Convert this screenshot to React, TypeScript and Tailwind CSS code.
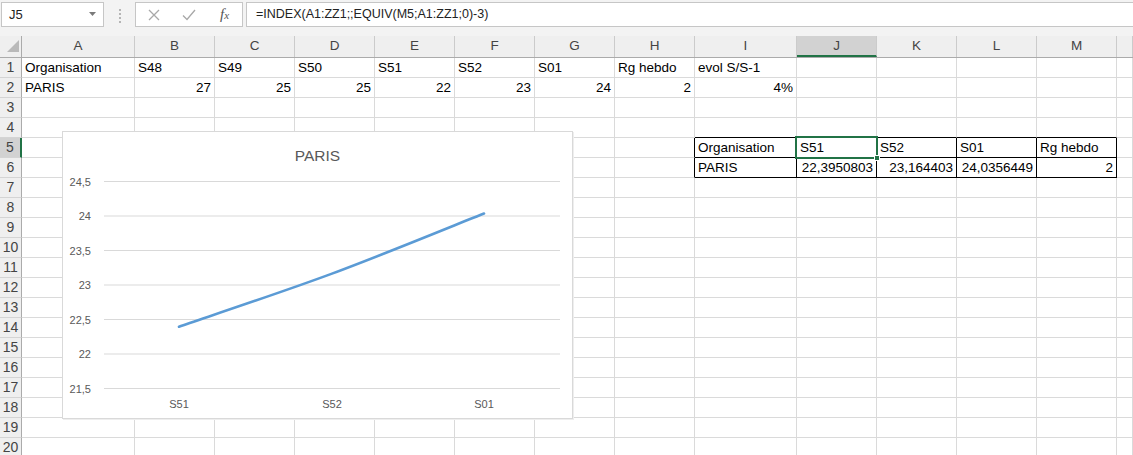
import React from "react";

const COLS = [
  { k: "A", w: "w-[113px]" },
  { k: "B", w: "w-[80px]" },
  { k: "C", w: "w-[80px]" },
  { k: "D", w: "w-[80px]" },
  { k: "E", w: "w-[80px]" },
  { k: "F", w: "w-[80px]" },
  { k: "G", w: "w-[80px]" },
  { k: "H", w: "w-[80px]" },
  { k: "I", w: "w-[102px]" },
  { k: "J", w: "w-[80px]" },
  { k: "K", w: "w-[80px]" },
  { k: "L", w: "w-[80px]" },
  { k: "M", w: "w-[80px]" },
  { k: "N", w: "flex-1" },
];

const ROWS = Array.from({ length: 20 }, (_, i) => i + 1);

// r = right aligned (numbers)
const cells: Record<string, { t: string; r?: boolean }> = {
  A1: { t: "Organisation" },
  B1: { t: "S48" },
  C1: { t: "S49" },
  D1: { t: "S50" },
  E1: { t: "S51" },
  F1: { t: "S52" },
  G1: { t: "S01" },
  H1: { t: "Rg hebdo" },
  I1: { t: "evol S/S-1" },
  A2: { t: "PARIS" },
  B2: { t: "27", r: true },
  C2: { t: "25", r: true },
  D2: { t: "25", r: true },
  E2: { t: "22", r: true },
  F2: { t: "23", r: true },
  G2: { t: "24", r: true },
  H2: { t: "2", r: true },
  I2: { t: "4%", r: true },
  I5: { t: "Organisation" },
  J5: { t: "S51" },
  K5: { t: "S52" },
  L5: { t: "S01" },
  M5: { t: "Rg hebdo" },
  I6: { t: "PARIS" },
  J6: { t: "22,3950803", r: true },
  K6: { t: "23,164403", r: true },
  L6: { t: "24,0356449", r: true },
  M6: { t: "2", r: true },
};

// bordered block I5:M6
const inTable = (r: number, c: number) => r >= 5 && r <= 6 && c >= 8 && c <= 12;

const font = { fontFamily: '"Liberation Sans", Arial, sans-serif' };

function Toolbar() {
  return (
    <div className="flex h-[36px] items-start bg-[#f3f3f3] pt-[2px]">
      <div className="relative ml-[1px] flex h-[25px] w-[103px] items-center border border-[#c6c6c6] bg-white pl-[7px] text-[13px] text-[#222]">
        J5
        <svg className="absolute right-[7px] top-[9px]" width="7" height="5" viewBox="0 0 7 5">
          <path d="M0 0 L7 0 L3.5 4 Z" fill="#7a7a7a" />
        </svg>
      </div>
      <div className="flex w-[31px] flex-col items-center gap-[2px] pt-[7px]">
        <span className="h-[2px] w-[2px] bg-[#b5b5b5]" />
        <span className="h-[2px] w-[2px] bg-[#b5b5b5]" />
        <span className="h-[2px] w-[2px] bg-[#b5b5b5]" />
        <span className="h-[2px] w-[2px] bg-[#b5b5b5]" />
      </div>
      <div className="flex h-[25px] w-[108px] items-center border border-[#c6c6c6] bg-white">
        <svg className="ml-[12px]" width="12" height="12" viewBox="0 0 12 12">
          <path d="M1 1 L11 11 M11 1 L1 11" stroke="#a8a8a8" strokeWidth="1.3" />
        </svg>
        <svg className="ml-[22px]" width="14" height="12" viewBox="0 0 14 12">
          <path d="M1 6.5 L5 10.5 L13 1" stroke="#a8a8a8" strokeWidth="1.3" fill="none" />
        </svg>
        <span
          className="ml-[24px] text-[15px] italic text-[#555]"
          style={{ fontFamily: '"Liberation Serif", "Times New Roman", serif' }}
        >
          f<span className="text-[11px]">x</span>
        </span>
      </div>
      <div className="ml-[3px] flex h-[25px] flex-1 items-center border border-r-0 border-[#c6c6c6] bg-white pl-[9px] text-[12.5px] text-[#222]">
        =INDEX(A1:ZZ1;;EQUIV(M5;A1:ZZ1;0)-3)
      </div>
    </div>
  );
}

function HeaderRow() {
  return (
    <div className="flex h-[22px] border-b border-[#ababab] bg-[#efefef] text-[13.5px] text-[#444]">
      <div className="relative w-[22px] border-r border-[#ababab]">
        <svg className="absolute left-[7px] top-[4px]" width="12" height="12" viewBox="0 0 12 12">
          <path d="M12 0 L12 12 L0 12 Z" fill="#b9b9b9" />
        </svg>
      </div>
      {COLS.map((c) => (
        <div
          key={c.k}
          className={`${c.w} flex items-center justify-center border-r border-[#cbcbcb] ${
            c.k === "J" ? "border-b-2 border-b-[#217346] bg-[#d2d2d2] pt-[2px]" : ""
          }`}
        >
          {c.k === "N" ? "" : c.k}
        </div>
      ))}
    </div>
  );
}

function Row({ r }: { r: number }) {
  return (
    <div className="flex h-[20px]">
      <div
        className={`flex w-[22px] items-center justify-center border-b border-[#d4d4d4] text-[14px] text-[#444] ${
          r === 5 ? "border-r-2 border-r-[#217346] bg-[#d2d2d2]" : "border-r border-r-[#ababab] bg-[#efefef]"
        }`}
      >
        {r}
      </div>
      {COLS.map((c, ci) => {
        const cell = cells[c.k + r];
        const blackR = inTable(r, ci) || inTable(r, ci + 1);
        const blackB = inTable(r, ci) || inTable(r + 1, ci);
        return (
          <div
            key={c.k}
            className={`${c.w} flex items-center overflow-visible whitespace-nowrap border-r border-b px-[3px] pt-[1px] text-[13.5px] text-black ${
              blackR ? "border-r-black" : "border-r-[#dadada]"
            } ${blackB ? "border-b-black" : "border-b-[#dadada]"} ${cell?.r ? "justify-end" : "justify-start"}`}
          >
            {cell?.t}
          </div>
        );
      })}
    </div>
  );
}

// chart geometry, relative to the chart box
const Y_TICKS = ["24,5", "24", "23,5", "23", "22,5", "22", "21,5"];
const yAt = (v: number) => 49.5 + ((24.5 - v) / 0.5) * 34.5;

function Chart() {
  const pts = [
    { x: 116, y: yAt(22.3950803), l: "S51" },
    { x: 269, y: yAt(23.164403), l: "S52" },
    { x: 421, y: yAt(24.0356449), l: "S01" },
  ];
  const [p0, p1, p2] = pts;
  const d = `M${p0.x} ${p0.y} C${p0.x + (p1.x - p0.x) / 6} ${p0.y + (p1.y - p0.y) / 6} ${
    p1.x - (p2.x - p0.x) / 6
  } ${p1.y - (p2.y - p0.y) / 6} ${p1.x} ${p1.y} C${p1.x + (p2.x - p0.x) / 6} ${p1.y + (p2.y - p0.y) / 6} ${
    p2.x - (p2.x - p1.x) / 6
  } ${p2.y - (p2.y - p1.y) / 6} ${p2.x} ${p2.y}`;

  return (
    <div className="absolute left-[62px] top-[95px] h-[288px] w-[511px] border border-[#d9d9d9] bg-white shadow-[1px_1px_0_#eeeeee]">
      <svg width="509" height="286" viewBox="0 0 509 286" style={font}>
        <text x="254.5" y="29" textAnchor="middle" fontSize="15.5" fill="#595959">
          PARIS
        </text>
        {Y_TICKS.map((t, i) => (
          <g key={t}>
            <line x1="41" x2="497" y1={49.5 + i * 34.5} y2={49.5 + i * 34.5} stroke="#d9d9d9" strokeWidth="1" />
            <text x="28" y={53.5 + i * 34.5} textAnchor="end" fontSize="11" fill="#595959">
              {t}
            </text>
          </g>
        ))}
        {pts.map((p) => (
          <text key={p.l} x={p.x} y="276" textAnchor="middle" fontSize="11" fill="#595959">
            {p.l}
          </text>
        ))}
        <path d={d} fill="none" stroke="#5b9bd5" strokeWidth="2.6" strokeLinecap="round" />
      </svg>
    </div>
  );
}

export default function App() {
  return (
    <div className="h-[455px] w-[1133px] overflow-hidden bg-white" style={font}>
      <Toolbar />
      <div className="relative">
        <HeaderRow />
        {ROWS.map((r) => (
          <Row key={r} r={r} />
        ))}
        <Chart />
        {/* active cell J5 */}
        <div className="absolute left-[795px] top-[100px] h-[23px] w-[83px] border-2 border-[#217346]">
          <span className="absolute -bottom-[4px] -right-[4px] h-[6px] w-[6px] border border-white bg-[#217346]" />
        </div>
      </div>
    </div>
  );
}
